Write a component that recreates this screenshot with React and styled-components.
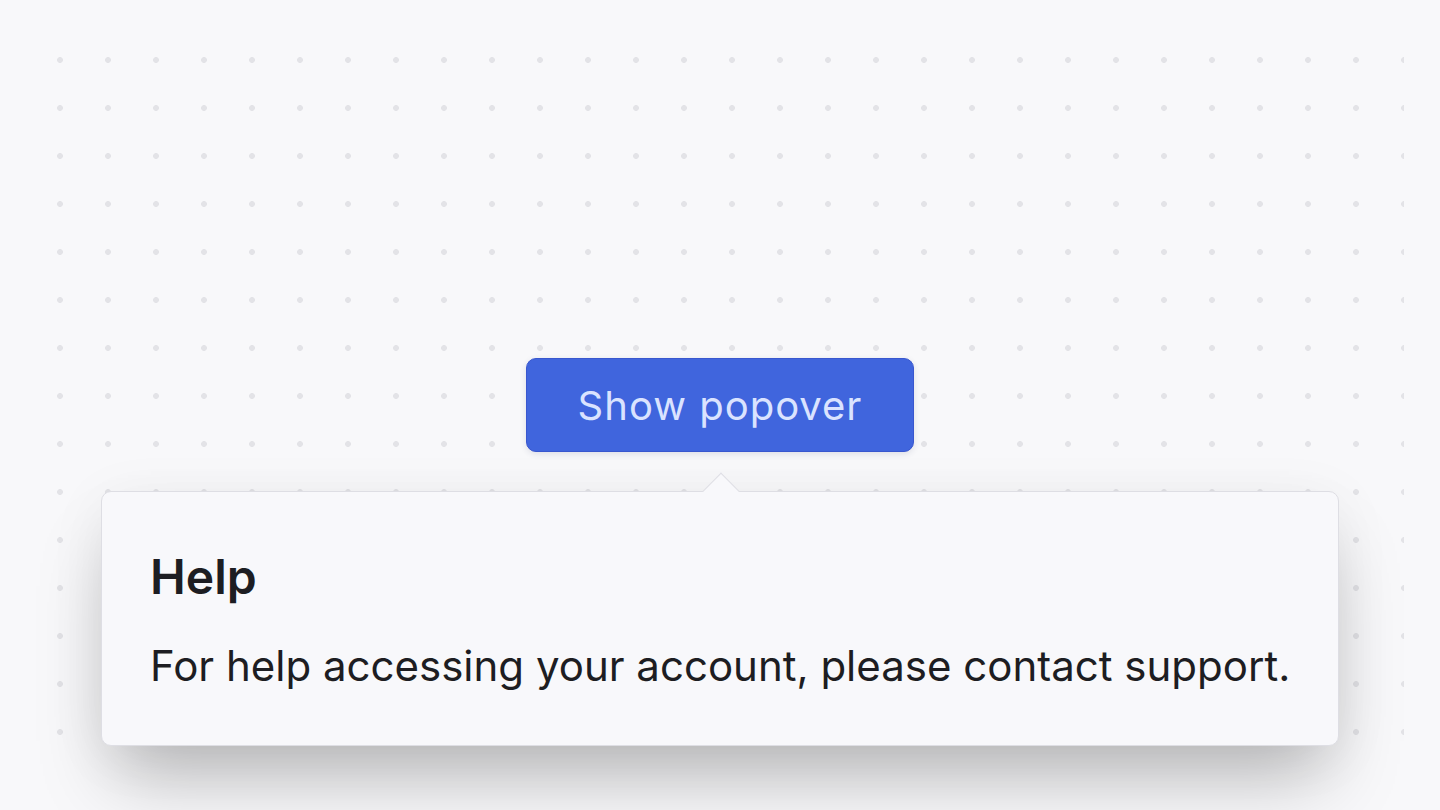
import React from "react";
import styled, { createGlobalStyle } from "styled-components";

const Global = createGlobalStyle`
  html, body { margin: 0; padding: 0; background: #f8f8fa; }
  body { font-family: Inter, "Noto Sans", "Liberation Sans", sans-serif; -webkit-font-smoothing: antialiased; }
`;

const Page = styled.div`
  position: relative;
  width: 1440px;
  height: 810px;
  overflow: hidden;
  background: #f8f8fa;
  &::before {
    content: "";
    position: absolute;
    left: 36px;
    top: 36px;
    width: 1368px;
    height: 720px;
    background-image: radial-gradient(circle at 24px 24px, #e3e3e7 0, #e3e3e7 2.6px, transparent 3.2px);
    background-size: 48px 48px;
  }
`;

const Stage = styled.div`
  position: relative;
  display: flex;
  flex-direction: column;
  align-items: center;
  padding-top: 358px;
`;

const Trigger = styled.button`
  box-sizing: border-box;
  height: 94px;
  width: 388px;
  padding: 0;
  border-radius: 10px;
  border: 1.5px solid #3957cf;
  background: #4065dd;
  color: #dae3ff;
  font-family: Inter, "Noto Sans", sans-serif;
  font-size: 40px;
  font-weight: 400;
  letter-spacing: 1px;
  box-shadow: 0 2px 6px rgba(30, 40, 90, 0.12);
  cursor: pointer;
`;

const Popover = styled.div`
  position: relative;
  box-sizing: border-box;
  width: 1238px;
  margin-top: 39px;
  padding: 55px 40px 48px 48px;
  background: #f8f8fb;
  border: 1.5px solid #dedee4;
  border-radius: 10px;
  box-shadow: 0 45px 70px -15px rgba(0, 0, 0, 0.25), 0 10px 60px rgba(0, 0, 0, 0.06);
  &::before {
    content: "";
    position: absolute;
    top: -14px;
    left: 50%;
    width: 25px;
    height: 25px;
    margin-left: -12px;
    background: #f8f8fb;
    border-top: 1.5px solid #dedee4;
    border-left: 1.5px solid #dedee4;
    transform: rotate(45deg);
  }
`;

const Title = styled.h2`
  margin: 0;
  font-size: 48px;
  line-height: 60px;
  font-weight: 600;
  color: #1d1d22;
`;

const Body = styled.p`
  margin: 28px 0 0;
  font-size: 42px;
  line-height: 62px;
  font-weight: 400;
  white-space: nowrap;
  color: #1d1d22;
`;

export default function App() {
  return (
    <Page>
      <Global />
      <Stage>
        <Trigger>Show popover</Trigger>
        <Popover>
          <Title>Help</Title>
          <Body>For help accessing your account, please contact support.</Body>
        </Popover>
      </Stage>
    </Page>
  );
}
